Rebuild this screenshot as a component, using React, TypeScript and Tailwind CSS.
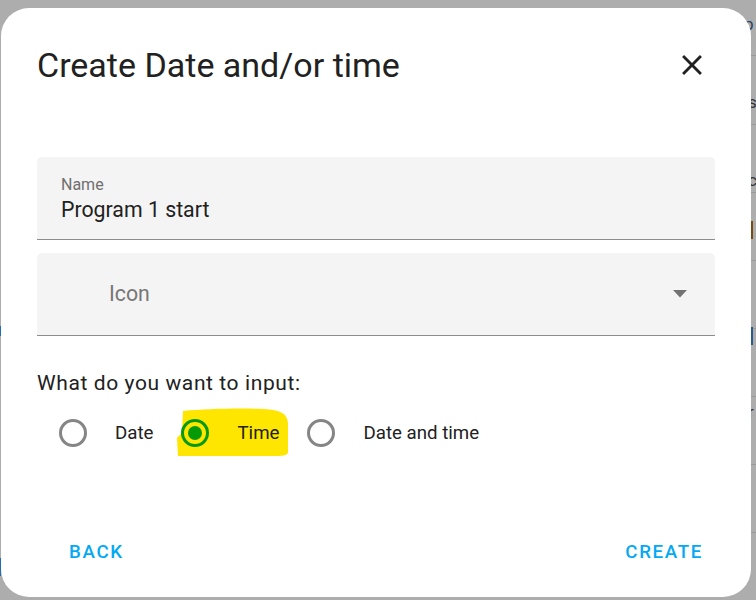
import React from "react";

const font = { fontFamily: 'Roboto, "Noto Sans", sans-serif' };

function Radio({ checked }: { checked?: boolean }) {
  if (checked) {
    return (
      <span className="flex h-[28px] w-[28px] shrink-0 items-center justify-center rounded-full border-[3px] border-[#069a06]">
        <span className="h-[14px] w-[14px] rounded-full bg-[#069a06]" />
      </span>
    );
  }
  return <span className="h-[28px] w-[28px] shrink-0 rounded-full border-[3px] border-[#858585]" />;
}

export default function App() {
  const lines = [55, 124, 192, 260, 328, 396, 464, 532];
  return (
    <div className="relative h-[600px] w-[756px] overflow-hidden bg-[#adadad]" style={font}>
      {/* dimmed page behind */}
      {lines.map((y) => (
        <div key={y} className="absolute right-0 h-px w-[6px] bg-[#9a9a9a]" style={{ top: y }} />
      ))}
      <span className="absolute left-[744px] top-[14px] text-[17px] leading-[20px] text-[#2a4260]">p</span>
      <span className="absolute left-[748px] top-[92px] text-[17px] leading-[20px] text-[#333]">s</span>
      <span className="absolute left-[748px] top-[170px] text-[17px] leading-[20px] text-[#333]">c</span>
      <span className="absolute left-[750px] top-[221px] h-[18px] w-[3px] bg-[#7a4a14]" />
      <span className="absolute left-[751px] top-[327px] h-[18px] w-[2px] bg-[#2a5a8a]" />
      <span className="absolute left-[748px] top-[402px] text-[17px] leading-[20px] text-[#333]">r</span>
      <span className="absolute left-0 top-[326px] h-[10px] w-px bg-[#1e6fb0]" />
      <span className="absolute left-0 top-[558px] h-[18px] w-px bg-[#1e6fb0]" />

      <div className="pl-px pt-[8px]">
        <div className="relative flex h-[589px] w-[750px] flex-col rounded-[28px] bg-white">
          {/* header */}
          <div className="flex items-center justify-between pl-9 pr-[42px] pt-[37px]">
            <h1 className="text-[34px] font-normal leading-[40px] text-[#212121]">Create Date and/or time</h1>
            <svg width="34" height="34" viewBox="0 0 24 24" className="text-[#212121]">
              <path
                fill="currentColor"
                d="M19 6.41L17.59 5 12 10.59 6.41 5 5 6.41 10.59 12 5 17.59 6.41 19 12 13.41 17.59 19 19 17.59 13.41 12z"
              />
            </svg>
          </div>

          <div className="px-9">
            {/* Name field */}
            <div className="mt-[72px] h-[83px] rounded-t-[5px] border-b border-[#8c8c8c] bg-[#f4f4f4] pl-6 pt-[18px]">
              <div className="text-[16px] leading-[20px] text-[#6f6f6f]">Name</div>
              <div className="mt-[2px] text-[21.3px] leading-[26px] text-[#212121]">Program 1 start</div>
            </div>

            {/* Icon field */}
            <div className="mt-[13px] flex h-[83px] items-center justify-between rounded-t-[5px] border-b border-[#8c8c8c] bg-[#f4f4f4] pl-[72px] pr-[28px]">
              <span className="text-[21.3px] leading-[26px] text-[#777777]">Icon</span>
              <svg width="14" height="8" viewBox="0 0 14 8">
                <path d="M0 0 L14 0 L7 7.5 Z" fill="#727272" />
              </svg>
            </div>

            {/* question */}
            <div className="mt-[33px] text-[21px] leading-[28px] tracking-[0.6px] text-[#212121]">
              What do you want to input:
            </div>

            {/* radios */}
            <div className="relative mt-[12px] flex h-[48px] items-center pl-[22px] text-[18.7px] leading-[24px] text-[#212121]">
              <svg
                className="absolute left-[139px] top-[-1px]"
                width="113"
                height="49"
                viewBox="0 0 113 49"
              >
                <path
                  d="M7 3 C30 1 60 0 88 1 C104 2 111 5 112 15 L112 45 C110 48 104 48 98 48 L2 48 L1 30 C3 27 6 27 6 22 Z"
                  fill="#ffe600"
                />
              </svg>
              <div className="relative flex items-center">
                <Radio />
                <span className="ml-[28px]">Date</span>
              </div>
              <div className="relative ml-[28px] flex items-center">
                <Radio checked />
                <span className="ml-[28px]">Time</span>
              </div>
              <div className="relative ml-[28px] flex items-center">
                <Radio />
                <span className="ml-[28px]">Date and time</span>
              </div>
            </div>
          </div>

          {/* footer */}
          <div className="mt-auto flex items-center justify-between pb-[33px] pl-[68px] pr-[48px]">
            <span className="text-[18.7px] font-medium leading-[24px] tracking-[1.67px] text-[#03a9f4]">BACK</span>
            <span className="text-[18.7px] font-medium leading-[24px] tracking-[1.67px] text-[#03a9f4]">CREATE</span>
          </div>
        </div>
      </div>
    </div>
  );
}
